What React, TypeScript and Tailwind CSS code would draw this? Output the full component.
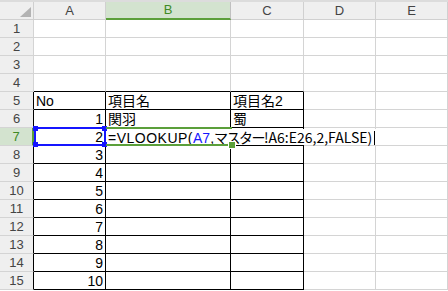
const GREEN = '#5b9f3a';

const colWidths = ['w-[72px]', 'w-[125px]', 'w-[73px]', 'w-[72px]', 'w-[72px]'];
const colNames = ['A', 'B', 'C', 'D', 'E'];

type CellText = { text: string; align?: 'left' | 'right' };

function cellContent(row: number, col: number): CellText | null {
  if (row === 5) {
    if (col === 0) return { text: 'No' };
    if (col === 1) return { text: '項目名' };
    if (col === 2) return { text: '項目名2' };
  }
  if (row === 6) {
    if (col === 0) return { text: '1', align: 'right' };
    if (col === 1) return { text: '関羽' };
    if (col === 2) return { text: '蜀' };
  }
  if (row >= 7 && col === 0) return { text: String(row - 5), align: 'right' };
  return null;
}

function Formula() {
  return (
    <>
      {/* 編集中のセル: テキストは右のセルにはみ出す */}
      <div className="absolute left-0 top-[1px] h-[16px] z-10 bg-white whitespace-nowrap pl-[2px] pr-[3px] leading-[16px]">
        <span className="tracking-[0.5px]">=VLOOKUP(</span>
        <span className="text-[#1515ff]">A7</span>
        <span>,</span>
        <span className="tracking-[-1.5px]">マスター</span>
        <span className="font-['Noto_Sans_CJK_JP']">!A6:E26,2,FALSE)</span>
        <span className="inline-block w-px h-[14px] bg-black ml-[2px] align-[-2px]" />
      </div>
      <div className="absolute left-0 top-[-1px] w-[126px] h-[2px] z-20" style={{ background: GREEN }} />
      <div className="absolute left-0 bottom-[-1px] w-[126px] h-[2px] z-20" style={{ background: GREEN }} />
      <div
        className="absolute left-[122px] bottom-[-4px] w-[6px] h-[6px] z-30 border border-white box-content"
        style={{ background: GREEN }}
      />
    </>
  );
}

function RefBox() {
  return (
    <div className="absolute left-0 top-[-1px] right-[-1px] bottom-[-1px] z-20 border-2 border-[#1515ff]">
      <span className="absolute left-[-3px] top-[-3px] w-[5px] h-[5px] bg-[#1515ff]" />
      <span className="absolute right-[-3px] top-[-3px] w-[5px] h-[5px] bg-[#1515ff]" />
      <span className="absolute left-[-3px] bottom-[-3px] w-[5px] h-[5px] bg-[#1515ff]" />
      <span className="absolute right-[-3px] bottom-[-3px] w-[5px] h-[5px] bg-[#1515ff]" />
    </div>
  );
}

export default function App() {
  const rows = Array.from({ length: 15 }, (_, i) => i + 1);

  return (
    <div
      className="w-[448px] h-[291px] overflow-hidden bg-white text-[14px] text-black"
      style={{ fontFamily: '"Liberation Sans", "Noto Sans CJK JP", sans-serif' }}
    >
      {/* 上の帯 */}
      <div className="h-[2px] bg-[#dcdcdc]" />

      {/* 列見出し */}
      <div className="flex h-[18px] text-[13px] text-[#444]">
        <div className="w-[34px] h-full bg-[#efefef] border-r border-b border-[#d0d0d0] flex items-end justify-end pr-[2px] pb-[2px]">
          <svg width="11" height="10" viewBox="0 0 11 10">
            <polygon points="11,0 11,10 0,10" fill="#b3b3b3" />
          </svg>
        </div>
        {colNames.map((n, i) =>
          n === 'B' ? (
            <div
              key={n}
              className={`${colWidths[i]} h-full bg-[#d3e3cf] border-r border-[#c0c0c0] border-b-2 flex items-center justify-center text-[#3f8a25]`}
              style={{ borderBottomColor: GREEN }}
            >
              {n}
            </div>
          ) : (
            <div
              key={n}
              className={`${colWidths[i]} h-full bg-[#efefef] border-r border-b border-[#d0d0d0] flex items-center justify-center`}
            >
              {n}
            </div>
          )
        )}
      </div>

      {/* 行 */}
      {rows.map(r => {
        const inTable = r >= 5;
        const sel = r === 7;
        return (
          <div key={r} className="flex h-[18px]">
            <div
              className={`w-[34px] h-full flex items-center justify-center text-[13px] border-b ${
                sel
                  ? 'bg-[#d3e3cf] text-[#3f8a25] border-r-2'
                  : 'bg-[#efefef] text-[#444] border-r'
              } ${inTable && !sel ? 'border-r-black' : ''} ${sel ? '' : 'border-[#d4d4d4]'}`}
              style={sel ? { borderRightColor: GREEN, borderBottomColor: '#d4d4d4' } : undefined}
            >
              {r}
            </div>
            {colNames.map((_, c) => {
              const tableCol = c <= 2;
              const black = tableCol && inTable;
              const topOfTable = tableCol && r === 4;
              const content = cellContent(r, c);
              return (
                <div
                  key={c}
                  className={`${colWidths[c]} h-full relative flex items-end leading-[16px] px-[2px] border-r border-b ${
                    black ? 'border-black' : topOfTable ? 'border-r-[#d4d4d4] border-b-black' : 'border-[#d4d4d4]'
                  } ${content?.align === 'right' ? 'justify-end' : 'justify-start'}`}
                >
                  {content && <span>{content.text}</span>}
                  {sel && c === 0 && <RefBox />}
                  {sel && c === 1 && <Formula />}
                </div>
              );
            })}
          </div>
        );
      })}
    </div>
  );
}
